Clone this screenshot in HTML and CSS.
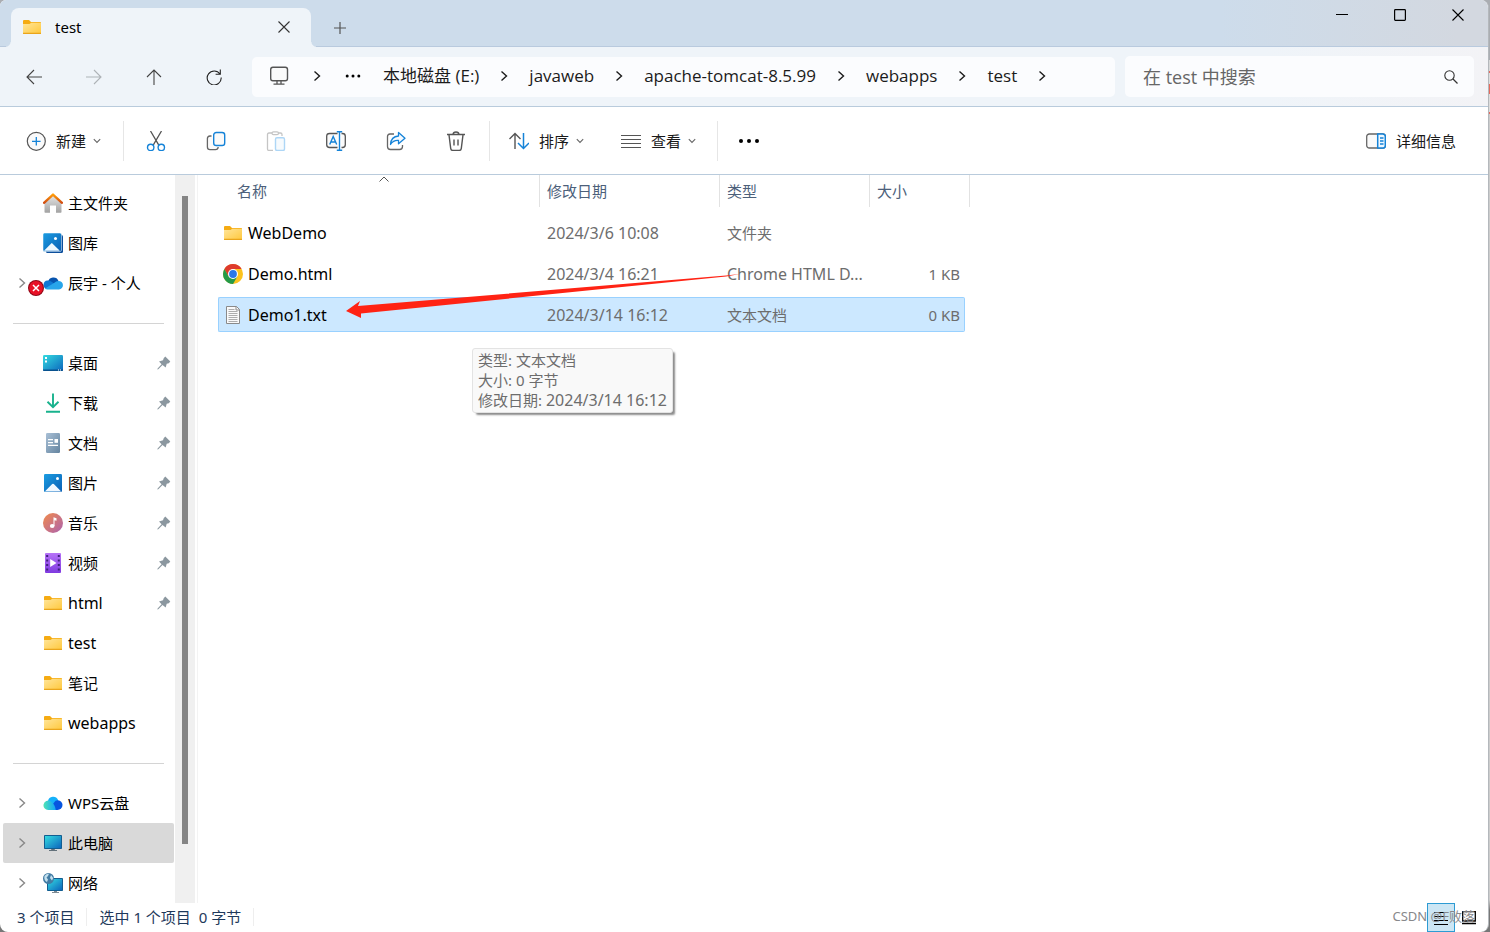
FILE: index.html
```html
<!DOCTYPE html>
<html lang="zh-CN">
<head>
<meta charset="utf-8">
<title>test</title>
<link rel="stylesheet" href="styles.css">
</head>
<body>
<svg class="defs" aria-hidden="true">
  <defs>
    <linearGradient id="g-folder" x1="0" y1="0" x2="1" y2="1"><stop offset="0" stop-color="#ffe59a"/><stop offset="1" stop-color="#ffc83c"/></linearGradient>
    <linearGradient id="g-blue" x1="0" y1="0" x2="1" y2="1"><stop offset="0" stop-color="#1b9de2"/><stop offset="1" stop-color="#0a5fb4"/></linearGradient>
    <linearGradient id="g-teal" x1="0" y1="0" x2="1" y2="1"><stop offset="0" stop-color="#34dbe0"/><stop offset="1" stop-color="#0c66bd"/></linearGradient>
    <linearGradient id="g-house" x1="0" y1="0" x2="0" y2="1"><stop offset="0" stop-color="#e8e8e8"/><stop offset="1" stop-color="#a2a2a2"/></linearGradient>
    <linearGradient id="g-roof" x1="0" y1="0" x2="0" y2="1"><stop offset="0" stop-color="#ff9d0a"/><stop offset="1" stop-color="#d24d13"/></linearGradient>
    <linearGradient id="g-doc" x1="0" y1="0" x2="1" y2="1"><stop offset="0" stop-color="#a9c0d6"/><stop offset="1" stop-color="#64849f"/></linearGradient>
    <linearGradient id="g-music" x1="0" y1="0" x2="1" y2="1"><stop offset="0" stop-color="#f28b4a"/><stop offset="1" stop-color="#ac62b0"/></linearGradient>
    <linearGradient id="g-video" x1="0" y1="0" x2="0" y2="1"><stop offset="0" stop-color="#b673f7"/><stop offset="1" stop-color="#7f3ae0"/></linearGradient>
    <linearGradient id="g-wps" x1="0" y1="0" x2="1" y2="0"><stop offset="0" stop-color="#4fe3b5"/><stop offset="1" stop-color="#12a6fa"/></linearGradient>
    <symbol id="folder" viewBox="0 0 20 20">
      <path d="M1 4.2q0-1.2 1-1.2h5l2 2h9.200q.8 0 .8.8V9H1z" fill="#f5ab12"/>
      <path d="M1 7h6.500l1.800-1.300H19V16.200q0 .8-.8.8H1.800q-.8 0-.8-.8z" fill="url(#g-folder)"/>
      <path d="M1 15.800h18v.6q0 .6-.8.6H1.800q-.8 0-.8-.6z" fill="#eaa51b"/>
    </symbol>
    <symbol id="home" viewBox="0 0 20 20">
      <path d="M1.500 9 10 1.500 18.500 9v10q0 .8-.8.8H13v-7.300H7v7.300H2.300q-.8 0-.8-.8z" fill="url(#g-house)"/>
      <path d="M1 9.800 10 1.600l9 8.200" fill="none" stroke="url(#g-roof)" stroke-width="2.400" stroke-linecap="round" stroke-linejoin="round"/>
    </symbol>
    <symbol id="gallery" viewBox="0 0 20 20">
      <rect x="3" y="2" width="17" height="18" rx="1.500" fill="#0d4f9c"/>
      <path d="M0 1.500Q0 0 1.500 0h15.500Q18.500 0 18.500 1.500V17q0 1.500-1.500 1.500H1.500Q0 18.500 0 17z" fill="url(#g-blue)" stroke="#fff" stroke-width=".5"/>
      <path d="M1 17.800 8.200 10.400q.6-.6 1.200 0l7.400 7.400z" fill="#eef8ff"/><circle cx="12.500" cy="5.500" r="1.500" fill="#fff"/>
    </symbol>
    <symbol id="onedrive" viewBox="0 0 20 20">
      <path d="M5 9a5.500 5.500 0 0 1 10.500-1l-4 5z" fill="#0754ae"/>
      <path d="M4 16a4.300 4.300 0 0 1 .5-8.500q2.500-.2 4.500 1.500l5 4z" fill="#0f78d4"/>
      <path d="M2 15.500 11 10q2-2 4.500-2a4.200 4.200 0 0 1 .5 8.400H4.500q-1.500 0-2.500-.9z" fill="#28a5ea"/>
    </symbol>
    <symbol id="error" viewBox="0 0 16 16">
      <circle cx="8" cy="8" r="8" fill="#8e0716"/><circle cx="8" cy="8" r="6.900" fill="#e81126"/><path d="m5 5 6 6M11 5l-6 6" stroke="#fff" stroke-width="1.500"/>
    </symbol>
    <symbol id="desktop" viewBox="0 0 20 20">
      <rect y="2" width="20" height="16" rx="1.200" fill="url(#g-teal)"/><path d="M0 16.500h20v.5q0 1-1 1H1q-1 0-1-1z" fill="#08518e"/>
      <path d="M2 4h2v2H2zM2 7.500h2v2H2zM15 16.500h1v1h-1zM17 16.500h1v1h-1z" fill="#fff"/>
    </symbol>
    <symbol id="download" viewBox="0 0 20 20">
      <path d="M10 .5v13.500M4.500 8.800l5.500 5.400 5.500-5.400M3 18.800h14" fill="none" stroke="#18b28d" stroke-width="1.900"/>
    </symbol>
    <symbol id="document" viewBox="0 0 20 20">
      <rect x="3" width="14" height="20" rx="1.200" fill="url(#g-doc)"/><path d="M5 6.600h5M5 9.600h5M5 12.400h10" stroke="#fff" stroke-width="1.200"/><path d="M11.500 6h3.500v3.800h-3.500z" fill="#fff"/>
    </symbol>
    <symbol id="picture" viewBox="0 0 20 20">
      <rect x="1" y="1" width="18" height="18" rx="1.200" fill="url(#g-blue)"/><path d="m1.800 18.500 7.400-7.400q.8-.8 1.600 0l7.400 7.400z" fill="#f0f8ff"/><circle cx="14.500" cy="5.500" r="1.500" fill="#fff"/>
    </symbol>
    <symbol id="music" viewBox="0 0 20 20">
      <circle cx="10" cy="10" r="10" fill="url(#g-music)"/><path d="M10.500 13V4.200l3 1.100v2.500l-2-.6V13z" fill="#fff"/><ellipse cx="9.200" cy="13" rx="2.300" ry="2" fill="#fff"/>
    </symbol>
    <symbol id="video" viewBox="0 0 20 20">
      <rect x="2" width="16" height="20" rx="1" fill="url(#g-video)"/><path d="M4.200 2v17M15.800 2v17" stroke="#40217c" stroke-width="2" stroke-dasharray="2 2.500"/><path d="m7.200 6 6.300 4-6.300 4z" fill="#fff"/>
    </symbol>
    <symbol id="wps" viewBox="0 0 20 20">
      <path d="M5 8a5.300 5.300 0 0 1 10-1.200V13H5z" fill="#15b1fa"/><path d="M9 17 7.500 14l5-6.200A4.800 4.800 0 0 1 19.500 12 5 5 0 0 1 14.500 17z" fill="#0755df"/><path d="M5.300 17A4.700 4.700 0 1 1 7.500 8.200Q12 11 12.800 17z" fill="url(#g-wps)"/>
    </symbol>
    <symbol id="pc" viewBox="0 0 20 20">
      <path d="M8.200 16h3.600v1H14v1H6v-1h2.200z" fill="#63717b"/><rect x="1" y="2" width="18" height="14" rx=".8" fill="#125e91"/><rect x="2" y="3" width="16" height="12" fill="url(#g-teal)"/>
    </symbol>
    <symbol id="network" viewBox="0 0 20 20">
      <path d="M11 17h3v2h2v1H9v-1h2z" fill="#7e8b94"/><rect x="4" y="5" width="16" height="13" rx=".8" fill="#125e91"/><rect x="5" y="6" width="14" height="11" fill="url(#g-teal)"/>
      <circle cx="5.500" cy="5.500" r="5.500" fill="#437ca4"/><path d="M1.500 3Q3.500.5 6 .8L5 3 3.500 4.500 5 6.500 4 9Q.5 7 1.500 3zM8 2l2.200 3L9 7.500 7 5z" fill="#c3e0ee"/>
    </symbol>
    <symbol id="pin" viewBox="0 0 14 14">
      <path d="M8.300.6 13.300 5.600 11.800 7.200 9.700 7.800 8.700 11.600 5.500 9 1.300 13.300.3 13.500.6 12.400 4.600 8.200 2 5.400 6 4.300 6.700 2.200z" fill="#8b979f"/>
    </symbol>
    <symbol id="chev-r" viewBox="0 0 8 12"><path d="m1.500 1.500 5 4.500-5 4.500" fill="none" stroke="currentColor" stroke-width="1.400"/></symbol>
    <symbol id="chev-d" viewBox="0 0 8 6"><path d="m.8 1.200 3.200 3.200 3.200-3.200" fill="none" stroke="#666" stroke-width="1.100"/></symbol>
    <symbol id="close" viewBox="0 0 12 12"><path d="m.5.5 11 11M11.500.5l-11 11" stroke="currentColor" stroke-width="1.100"/></symbol>
    <symbol id="chrome" viewBox="0 0 20 20">
      <circle cx="10" cy="10" r="10" fill="#fcc31e"/><path d="M1.340 5A10 10 0 0 1 18.660 5H10L5.670 12.500z" fill="#de3a2c"/><path d="M1.340 5A10 10 0 0 0 10 20l4.330-7.500H5.670z" fill="#249a48"/><circle cx="10" cy="10" r="5" fill="#fff"/><circle cx="10" cy="10" r="3.900" fill="#2978e8"/>
    </symbol>
    <symbol id="txt" viewBox="0 0 20 20">
      <path d="M3.500 1.500h10l3 3v14h-13z" fill="#fafafa" stroke="#8a8a8a"/><path d="M13 1.500v3.500h3.500" fill="none" stroke="#8a8a8a"/><path d="M5.500 4.500h6M5.500 6.500h9M5.500 8.500h9M5.500 10.500h9M5.500 12.500h9M5.500 14.500h9M5.500 16.500h9" stroke="#adadad"/>
    </symbol>
  </defs>
</svg>

<div class="window">
  <header class="titlebar">
    <div class="tab">
      <svg class="ico"><use href="#folder"/></svg>
      <span class="tab-title">test</span>
      <button class="tab-close" aria-label="关闭标签页"><svg width="12" height="12"><use href="#close"/></svg></button>
    </div>
    <button class="tab-add" aria-label="新建标签页"><svg width="12" height="12" viewBox="0 0 12 12"><path d="M6 0v12M0 6h12" stroke="#555" stroke-width="1.200"/></svg></button>
    <div class="window-buttons">
      <button aria-label="最小化"><svg width="12" height="12" viewBox="0 0 12 12"><path d="M0 5.500h12" stroke="#000"/></svg></button>
      <button aria-label="最大化"><svg width="12" height="12" viewBox="0 0 12 12"><rect x=".6" y=".6" width="10.800" height="10.800" rx=".8" fill="none" stroke="#000" stroke-width="1.200"/></svg></button>
      <button aria-label="关闭"><svg width="12" height="12"><use href="#close"/></svg></button>
    </div>
  </header>

  <div class="navbar">
    <div class="nav-buttons">
      <button aria-label="后退"><svg width="16" height="16" viewBox="0 0 16 16"><path d="M16 8H1M8 1 1 8l7 7" fill="none" stroke="#444" stroke-width="1.100"/></svg></button>
      <button aria-label="前进" disabled><svg width="16" height="16" viewBox="0 0 16 16"><path d="M0 8h15M8 1l7 7-7 7" fill="none" stroke="#aeb3b7" stroke-width="1.100"/></svg></button>
      <button aria-label="向上"><svg width="16" height="16" viewBox="0 0 16 16"><path d="M8 16V1M1 8l7-7 7 7" fill="none" stroke="#444" stroke-width="1.100"/></svg></button>
      <button aria-label="刷新"><svg width="16" height="16" viewBox="0 0 16 16"><path d="M14 5A7 7 0 1 0 15.200 8.500M14.300.5v4.700H9.600" fill="none" stroke="#222" stroke-width="1.100"/></svg></button>
    </div>
    <nav class="address" aria-label="地址">
      <svg class="monitor" width="20" height="20" viewBox="0 0 20 20"><rect x="1.700" y="1.200" width="16.800" height="13.600" rx="2.200" fill="#fafafa" stroke="#555" stroke-width="1.400"/><path d="M8 15v3M12 15v3M4.500 18.200h11" stroke="#555" stroke-width="1.300"/></svg>
      <svg class="crumb-sep"><use href="#chev-r"/></svg>
      <button class="crumb-more" aria-label="更多"><svg width="16" height="4" viewBox="0 0 16 4"><circle cx="2.200" cy="2" r="1.500"/><circle cx="8" cy="2" r="1.500"/><circle cx="13.800" cy="2" r="1.500"/></svg></button>
      <a href="#">本地磁盘 (E:)</a>
      <svg class="crumb-sep"><use href="#chev-r"/></svg>
      <a href="#">javaweb</a>
      <svg class="crumb-sep"><use href="#chev-r"/></svg>
      <a href="#">apache-tomcat-8.5.99</a>
      <svg class="crumb-sep"><use href="#chev-r"/></svg>
      <a href="#">webapps</a>
      <svg class="crumb-sep"><use href="#chev-r"/></svg>
      <a href="#">test</a>
      <svg class="crumb-sep"><use href="#chev-r"/></svg>
    </nav>
    <div class="search">
      <input type="text" placeholder="在 test 中搜索" aria-label="搜索">
      <svg width="14" height="14" viewBox="0 0 14 14"><circle cx="5.500" cy="5.500" r="4.700" fill="none" stroke="#333" stroke-width="1.100"/><path d="m9 9 4.500 4.500" stroke="#333" stroke-width="1.200"/></svg>
    </div>
  </div>

  <div class="toolbar">
    <button class="cmd"><svg class="ico" viewBox="0 0 20 20"><circle cx="10.300" cy="10.300" r="9" fill="#fafafa" stroke="#555" stroke-width="1.200"/><path d="M10.300 6v8.600M6 10.300h8.600" stroke="#1583d8" stroke-width="1.300"/></svg><span>新建</span><svg class="chev"><use href="#chev-d"/></svg></button>
    <i class="sep"></i>
    <div class="icon-group">
      <button aria-label="剪切"><svg class="ico" viewBox="0 0 20 20"><path d="m4.500 0 8.300 14.200M15.500 0 7.200 14.200" stroke="#555" stroke-width="1.300"/><circle cx="4.700" cy="16.400" r="3.200" fill="#fff" stroke="#1583d8" stroke-width="1.400"/><circle cx="15.300" cy="16.400" r="3.200" fill="#fff" stroke="#1583d8" stroke-width="1.400"/></svg></button>
      <button aria-label="复制"><svg class="ico" viewBox="0 0 20 20"><path d="M5.500 5H4q-2.600 0-2.600 2.600V16q0 2.600 2.600 2.600h5.500q2.500 0 2.700-2.600" fill="#fafafa" stroke="#666" stroke-width="1.300"/><rect x="7.700" y="1.500" width="11" height="13" rx="2.600" fill="#fafafa" stroke="#1583d8" stroke-width="1.400"/></svg></button>
      <button aria-label="粘贴" disabled><svg class="ico" viewBox="0 0 20 20"><path d="M6.500 2H3q-1.500 0-1.500 1.500v14.500q0 1.500 1.500 1.500h4M12 2h2.500q1.500 0 1.500 1.500V5" fill="none" stroke="#c5c5c5" stroke-width="1.300"/><rect x="6" y=".8" width="6.500" height="2.800" rx="1.400" fill="#fff" stroke="#c5c5c5" stroke-width="1.200"/><rect x="9.500" y="6.700" width="9" height="12.800" rx="1.500" fill="#f6fafd" stroke="#add6f6" stroke-width="1.400"/></svg></button>
      <button aria-label="重命名"><svg class="ico" viewBox="0 0 20 20"><path d="M11.500 2.500H3.600Q.7 2.500.7 5.300v8.400q0 2.800 2.900 2.800h7.900M15.500 2.500h1q2.800 0 2.800 2.800v8.400q0 2.800-2.800 2.800h-1" fill="#fafafa" stroke="#555" stroke-width="1.300"/><path d="m3.700 13.500 3.500-8 3.500 8M4.800 11h4.800M13.500.7v18.600M10.800.7h5.400M10.800 19.300h5.400" fill="none" stroke="#1583d8" stroke-width="1.400"/></svg></button>
      <button aria-label="共享"><svg class="ico" viewBox="0 0 20 20"><path d="M8 3H4Q1.500 3 1.500 5.500v10Q1.500 18.500 4.500 18.500h9q3 0 3-3V14" fill="none" stroke="#666" stroke-width="1.300"/><path d="M12.500 1.500 19 7.300l-6.500 5.500V9.500Q7.500 9 4.500 13.500 5 5.500 12.500 5z" fill="#f5faff" stroke="#1583d8" stroke-width="1.300" stroke-linejoin="round"/></svg></button>
      <button aria-label="删除"><svg class="ico" viewBox="0 0 20 20"><path d="M1 3.500h18M7 3.500Q7.200 1 10 1t3 2.500M3 3.800l1.700 13.500q.3 2.200 2.300 2.200h6q2 0 2.300-2.200L17 3.800M8 8.500v6M12 8.500v6" fill="none" stroke="#555" stroke-width="1.400"/></svg></button>
    </div>
    <i class="sep"></i>
    <button class="cmd cmd-wide"><svg class="ico" viewBox="0 0 20 20"><path d="M6 18V2.500M.5 8 6 2.500 11.500 8" fill="none" stroke="#555" stroke-width="1.400"/><path d="M14.500 2v15.500M9 12l5.500 5.500L20 12" fill="none" stroke="#1583d8" stroke-width="1.500"/></svg><span>排序</span><svg class="chev"><use href="#chev-d"/></svg></button>
    <button class="cmd cmd-wide"><svg class="ico" viewBox="0 0 20 20"><path d="M0 4.500h20M0 8.500h20M0 12.500h20M0 16.500h20" stroke="#555" stroke-width="1.100"/></svg><span>查看</span><svg class="chev"><use href="#chev-d"/></svg></button>
    <i class="sep"></i>
    <button class="cmd more" aria-label="查看更多"><svg width="22" height="6" viewBox="0 0 22 6"><circle cx="3" cy="3" r="2"/><circle cx="11" cy="3" r="2"/><circle cx="19" cy="3" r="2"/></svg></button>
    <button class="cmd details"><svg class="ico" viewBox="0 0 20 20"><rect x=".7" y="3" width="18.600" height="14" rx="2.600" fill="#fafafa" stroke="#666" stroke-width="1.300"/><path d="M11.700 3h5q2.600 0 2.600 2.600v8.800q0 2.600-2.600 2.600h-5z" fill="#eef7fe" stroke="#1583d8" stroke-width="1.500"/><path d="M14 7h3.500M14 10h3.500M14 13h3.500" stroke="#1583d8" stroke-width="1.300"/></svg><span>详细信息</span></button>
  </div>

  <div class="content">
    <aside class="sidebar">
      <ul class="tree">
        <li><a href="#"><svg class="ico"><use href="#home"/></svg>主文件夹</a></li>
        <li><a href="#"><svg class="ico"><use href="#gallery"/></svg>图库</a></li>
        <li><svg class="expand"><use href="#chev-r"/></svg><a href="#"><svg class="ico"><use href="#onedrive"/></svg>辰宇 - 个人</a><svg class="badge"><use href="#error"/></svg></li>
        <li class="divider"></li>
        <li><a href="#"><svg class="ico"><use href="#desktop"/></svg>桌面</a><svg class="pin"><use href="#pin"/></svg></li>
        <li><a href="#"><svg class="ico"><use href="#download"/></svg>下载</a><svg class="pin"><use href="#pin"/></svg></li>
        <li><a href="#"><svg class="ico"><use href="#document"/></svg>文档</a><svg class="pin"><use href="#pin"/></svg></li>
        <li><a href="#"><svg class="ico"><use href="#picture"/></svg>图片</a><svg class="pin"><use href="#pin"/></svg></li>
        <li><a href="#"><svg class="ico"><use href="#music"/></svg>音乐</a><svg class="pin"><use href="#pin"/></svg></li>
        <li><a href="#"><svg class="ico"><use href="#video"/></svg>视频</a><svg class="pin"><use href="#pin"/></svg></li>
        <li><a class="latin" href="#"><svg class="ico"><use href="#folder"/></svg>html</a><svg class="pin"><use href="#pin"/></svg></li>
        <li><a class="latin" href="#"><svg class="ico"><use href="#folder"/></svg>test</a></li>
        <li><a href="#"><svg class="ico"><use href="#folder"/></svg>笔记</a></li>
        <li><a class="latin" href="#"><svg class="ico"><use href="#folder"/></svg>webapps</a></li>
        <li class="divider"></li>
        <li><svg class="expand"><use href="#chev-r"/></svg><a href="#"><svg class="ico"><use href="#wps"/></svg>WPS云盘</a></li>
        <li class="current"><svg class="expand"><use href="#chev-r"/></svg><a href="#"><svg class="ico"><use href="#pc"/></svg>此电脑</a></li>
        <li><svg class="expand"><use href="#chev-r"/></svg><a href="#"><svg class="ico"><use href="#network"/></svg>网络</a></li>
      </ul>
      <div class="scrollbar"><div class="thumb"></div></div>
    </aside>
    <main class="files">
      <table>
        <colgroup><col class="c-name"><col class="c-date"><col class="c-type"><col class="c-size"></colgroup>
        <thead>
          <tr><th><span class="head">名称</span><svg class="sort" viewBox="0 0 10 6"><path d="M.5 5.500 5 1l4.500 4.500" fill="none" stroke="#555"/></svg></th><th><span class="head">修改日期</span></th><th><span class="head">类型</span></th><th><span class="head">大小</span></th></tr>
        </thead>
        <tbody>
          <tr><td class="latin"><div class="file"><svg class="ico"><use href="#folder"/></svg>WebDemo</div></td><td class="latin">2024/3/6 10:08</td><td>文件夹</td><td></td></tr>
          <tr><td class="latin"><div class="file"><svg class="ico"><use href="#chrome"/></svg>Demo.html</div></td><td class="latin">2024/3/4 16:21</td><td class="latin">Chrome HTML D...</td><td>1 KB</td></tr>
          <tr class="selected"><td class="latin"><div class="file"><svg class="ico"><use href="#txt"/></svg>Demo1.txt</div></td><td class="latin">2024/3/14 16:12</td><td>文本文档</td><td>0 KB</td></tr>
        </tbody>
      </table>
      <svg class="arrow" viewBox="0 0 394 46"><path d="M0 39 14 29 12 34 380 3.500 394 2 380 4.500 15 41.500 15 46z" fill="#ff2314"/></svg>
      <div class="tooltip" role="tooltip">类型: 文本文档<br>大小: 0 字节<br>修改日期: <span class="latin">2024/3/14 16:12</span></div>
    </main>
  </div>

  <footer class="status">
    <span class="count">3 个项目</span>
    <span class="selection">选中 1 个项目&nbsp; 0 字节</span>
    <div class="views">
      <span class="watermark">CSDN @F败落</span>
      <button class="active" aria-label="详细信息视图"><svg width="16" height="16" viewBox="0 0 16 16"><path d="M1 2.500h14M1 6.500h14M1 10.500h14M1 14.500h14" stroke="#000"/></svg></button>
      <button aria-label="大缩略图视图"><svg width="16" height="16" viewBox="0 0 16 16"><path d="M1.700 1.700h12.600v9.300H1.700zM1 13.500h14" fill="none" stroke="#000" stroke-width="1.300"/></svg></button>
    </div>
  </footer>
</div>
</body>
</html>
```

FILE: styles.css
```css
* { box-sizing: border-box; }

html, body { height: 100%; }

body {
  margin: 0;
  padding-right: 1px;
  overflow: hidden;
  font: 15px/20px "Noto Sans", "Noto Sans CJK SC", sans-serif;
  color: #000;
  background: linear-gradient(#aaadb2 0 60px, #d8d8d8 60px 71px, #e76a5c 71px 73px, #ddd 73px 84px, #e76a5c 84px 94px, #ddd 94px 112px, #e76a5c 112px 114px, #ccc 114px 900px, #777 910px);
}

button {
  display: flex;
  align-items: center;
  justify-content: center;
  margin: 0;
  padding: 0;
  border: 0;
  background: none;
  color: inherit;
  font: inherit;
}

a { color: inherit; text-decoration: none; }
svg { display: block; flex: none; }
.defs { position: absolute; width: 0; height: 0; }
.ico { width: 20px; height: 20px; }
.latin { font-size: 16px; }

.window {
  display: flex;
  flex-direction: column;
  height: 100%;
  overflow: hidden;
  background: #fff;
  border-right: 1px solid #b4b8bc;
  border-radius: 6px 8px 8px 8px;
}

/* Title bar */
.titlebar {
  display: flex;
  height: 47px;
  padding: 8px 0 0 11px;
  background: linear-gradient(90deg, #cddceb 82%, #d3d8e0 98%);
  box-shadow: inset 0 -1px #b9cade;
}

.tab {
  position: relative;
  display: flex;
  align-items: center;
  width: 300px;
  padding: 0 20px 2px 11px;
  border-radius: 8px 8px 0 0;
  background: #eff4f9;
}

.tab::before, .tab::after {
  content: "";
  position: absolute;
  bottom: 0;
  width: 5px;
  height: 5px;
}
.tab::before { right: 100%; background: radial-gradient(circle at 0 0, transparent 4px, #eff4f9 5px); }
.tab::after { left: 100%; background: radial-gradient(circle at 100% 0, transparent 4px, #eff4f9 5px); }

.tab-title { flex: 1; padding-left: 13px; }
.tab-close { width: 14px; height: 20px; color: #333; }
.tab-add { width: 58px; height: 39px; }

.window-buttons { display: flex; margin: -8px 1px 0 auto; }
.window-buttons button { width: 58px; height: 30px; }

/* Navigation */
.navbar {
  display: flex;
  align-items: center;
  gap: 10px;
  height: 60px;
  padding: 0 14px 0 4px;
  background: linear-gradient(90deg, #eff4f9 85%, #f3f3f6);
  border-bottom: 1px solid #b9cbdc;
}

.nav-buttons { display: flex; margin-right: -2px; }
.nav-buttons button { width: 60px; height: 40px; }

.address {
  display: flex;
  flex: 1;
  align-items: center;
  height: 40px;
  padding: 0 0 2px 17px;
  border-radius: 5px;
  background: #fbfcfe;
  color: #1b1b1b;
  font-size: 17px;
  white-space: nowrap;
}

.address a { font-family: "Open Sans", "Noto Sans CJK SC", sans-serif; }
.crumb-sep { width: 8px; height: 12px; margin: 0 21px 0 22px; }
a + .crumb-sep { margin: 0 21px; }
.monitor + .crumb-sep { margin: 0 22px 0 24px; }
.crumb-more { width: 20px; height: 24px; margin-right: 20px; }

.search {
  display: flex;
  align-items: center;
  width: 349px;
  height: 41px;
  padding: 0 16px 0 18px;
  border-radius: 5px;
  background: #fbfcfe;
}

.search input {
  flex: 1;
  min-width: 0;
  padding: 0;
  border: 0;
  outline: 0;
  background: none;
  font: 18px/24px "Open Sans", "Noto Sans CJK SC", sans-serif;
}
.search input::placeholder { color: #666; }

/* Commands */
.toolbar {
  display: flex;
  align-items: center;
  height: 68px;
  padding: 0 32px 0 26px;
  border-bottom: 1px solid #b9cbdc;
}

.cmd { gap: 10px; height: 40px; color: #1a1a1a; white-space: nowrap; }
.chev { width: 8px; height: 6px; margin-left: -3px; }
.sep { width: 1px; height: 40px; margin-left: 22px; background: #e6e6e6; }
.icon-group { display: flex; padding-left: 2px; }
.icon-group button { width: 60px; height: 40px; }
.icon-group + .sep { margin-left: 3px; }
.cmd-wide { margin-left: 19px; }
.cmd-wide + .cmd-wide { margin-left: 37px; }
.cmd-wide + .sep { margin-left: 21px; }
.more { margin-left: 20px; }
.details { margin-left: auto; }

/* Panes */
.content { display: flex; flex: 1; min-height: 0; }

.sidebar { display: flex; width: 195px; }

.tree {
  flex: 1;
  margin: 0;
  padding: 8px 1px 0 3px;
  overflow: hidden;
  list-style: none;
}

.tree li {
  position: relative;
  display: flex;
  align-items: center;
  height: 40px;
  padding: 0 4px 0 40px;
}

.tree a { display: flex; flex: 1; align-items: center; gap: 5px; white-space: nowrap; }
.tree .current { border-radius: 2px; background: #d9d9d9; }
.tree .divider::before { content: ""; width: 151px; height: 1px; margin-left: -30px; background: #d4d4d4; }
.expand { width: 8px; height: 12px; margin: 0 13px 0 -25px; color: #888; }
.expand + a { margin-left: 4px; }
.badge { position: absolute; left: 25px; top: 17px; width: 16px; height: 16px; }
.pin { width: 14px; height: 14px; margin-right: -1px; }

.scrollbar { width: 20px; padding: 21px 0 59px 7px; background: #f0f0f0; }
.thumb { width: 6px; height: 100%; background: #858585; }

.files {
  position: relative;
  flex: 1;
  margin-left: 2px;
  padding-left: 20px;
  overflow: hidden;
  border-left: 1px solid #f3f3f3;
}

.files table {
  width: 747px;
  margin-top: -6px;
  border-spacing: 0 6px;
  table-layout: fixed;
}

.c-name { width: 322px; }
.c-date { width: 180px; }
.c-type { width: 150px; }
.c-size { width: 95px; }

.files th { position: relative; height: 34px; padding: 0; vertical-align: top; text-align: left; font-weight: 400; color: #4c607a; }
.head { display: block; height: 32px; padding: 6px 7px 0; border-right: 1px solid #e2e2e2; }
.files th:first-child .head { padding-left: 19px; }
.files th:last-child .head { width: 100px; }
.sort { position: absolute; left: 161px; top: 1px; width: 10px; height: 6px; }

.files td { height: 35px; padding: 0 7px; color: #6d6d6d; white-space: nowrap; }
.files td:first-child { padding: 0 5px; color: #000; }
.files td:last-child { padding-right: 5px; text-align: right; }
.file { display: flex; align-items: center; gap: 5px; }

.selected td { border: solid #99d1ff; border-width: 1px 0; background: #cce8ff; }
.selected td:first-child { border-left-width: 1px; border-radius: 2px 0 0 2px; padding-left: 4px; }
.selected td:last-child { border-right-width: 1px; border-radius: 0 2px 2px 0; padding-right: 4px; }

.arrow { position: absolute; left: 148px; top: 97px; width: 394px; height: 46px; }

.tooltip {
  position: absolute;
  left: 274px;
  top: 173px;
  padding: 1px 5px 2px;
  border: 1px solid #e3e3e3;
  border-radius: 3px;
  background: #f9f9f9;
  box-shadow: 3px 3px 2px -1px #8c8c8c;
  color: #6d6d6d;
  white-space: nowrap;
}

/* Status bar */
.status {
  display: flex;
  align-items: center;
  height: 29px;
  padding: 0 5px 0 17px;
  color: #1e395b;
}

.count, .selection { margin-bottom: 2px; padding-right: 12px; border-right: 1px solid #eee; line-height: 18px; }
.selection { padding-left: 12px; }
.views { display: flex; align-items: center; margin-left: auto; }
.views button { width: 28px; height: 29px; }
.views .active { border: 1px solid #2d9bd3; background: #cce6f4; }

.watermark {
  position: relative;
  z-index: 1;
  margin: 0 -48px 3px 0;
  color: #88888b;
  font-size: 13px;
}
```
